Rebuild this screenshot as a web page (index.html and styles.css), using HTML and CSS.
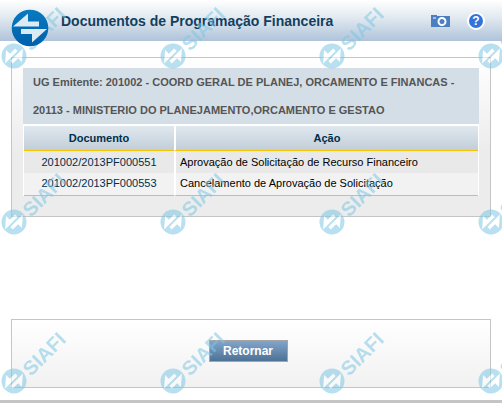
FILE: index.html
```html
<!DOCTYPE html>
<html lang="pt-BR">
<head>
  <meta charset="utf-8">
  <title>Documentos de Programação Financeira</title>
  <link rel="stylesheet" href="styles.css">
</head>
<body>
  <header class="topbar">
    <svg class="logo" viewBox="0 0 38 38" aria-hidden="true">
      <defs>
        <linearGradient id="logoBlue" x1="0" y1="0" x2="0" y2="1">
          <stop offset="0" stop-color="#087abf"/>
          <stop offset="1" stop-color="#0060ac"/>
        </linearGradient>
      </defs>
      <circle cx="19" cy="19" r="18.3" fill="url(#logoBlue)"/>
      <path d="M2 17.500L17 4.500V12.500H28V17.500Z" fill="#dceaf4"/>
      <path d="M36 20L21 33.500V25H10V20Z" fill="#dceaf4"/>
    </svg>
    <h1>Documentos de Programação Financeira</h1>
    <button type="button" class="icon" aria-label="Capturar tela">
      <svg width="19" height="12" viewBox="0 0 19 12">
        <path d="M0 0H6V1H19V12H0Z" fill="#4b7fc1"/>
        <path d="M2 3H5" stroke="#fff"/>
        <circle cx="11" cy="6.500" r="3.500" fill="none" stroke="#fff" stroke-width="2"/>
      </svg>
    </button>
    <button type="button" class="icon" aria-label="Ajuda"><span class="help">?</span></button>
  </header>

  <main>
    <section class="panel">
      <h2>UG Emitente: 201002 - COORD GERAL DE PLANEJ, ORCAMENTO E FINANCAS - 20113 - MINISTERIO DO PLANEJAMENTO,ORCAMENTO E GESTAO</h2>
      <table>
        <thead>
          <tr><th class="doc">Documento</th><th>Ação</th></tr>
        </thead>
        <tbody>
          <tr><td class="doc">201002/2013PF000551</td><td>Aprovação de Solicitação de Recurso Financeiro</td></tr>
          <tr><td class="doc">201002/2013PF000553</td><td>Cancelamento de Aprovação de Solicitação</td></tr>
        </tbody>
      </table>
    </section>

    <section class="panel actions">
      <button type="button" class="return">Retornar</button>
    </section>
  </main>
  <footer></footer>

  <!-- repeated SIAFI mark over the whole page -->
  <div class="watermark" aria-hidden="true">
    <svg>
      <defs>
        <pattern id="mark" width="159" height="68" patternUnits="userSpaceOnUse">
          <circle cx="14" cy="54" r="12.500" fill="#7fc8e4"/>
          <g transform="translate(14 54) rotate(-45) scale(0.680) translate(-19 -19)" fill="#fff">
            <path d="M2 17.500L17 4.500V12.500H28V17.500Z"/>
            <path d="M36 20.500L21 33.500V25.500H10V20.500Z"/>
          </g>
          <text class="mark-text" transform="translate(31 50) rotate(-45)">SIAFI</text>
        </pattern>
      </defs>
      <rect width="100%" height="68" fill="url(#mark)"/>
    </svg>
    <svg><rect width="100%" height="68" fill="url(#mark)"/></svg>
    <svg><rect width="100%" height="68" fill="url(#mark)"/></svg>
  </div>
</body>
</html>
```

FILE: styles.css
```css
body {
  position: relative;
  margin: 0;
  background: #fff;
  font-family: "Liberation Sans", Arial, sans-serif;
  font-size: 11px;
  color: #000;
}
.topbar {
  display: flex;
  align-items: center;
  height: 41px;
  padding: 0 17px 0 11px;
  background: linear-gradient(#fff, #e0e8ef 45%, #afc3da);
}
.logo {
  width: 38px;
  height: 38px;
  margin: 14px 12px 0 0;
  flex: none;
  position: relative;
  z-index: 2;
}
h1 {
  flex: 1;
  margin: 0;
  font-size: 14px;
  color: #123f60;
}
.icon {
  display: flex;
  margin: 0 0 0 17px;
  padding: 0;
  border: 0;
  background: none;
  cursor: pointer;
}
.help {
  width: 14px;
  height: 14px;
  border: 2px solid #fff;
  border-radius: 50%;
  background: #3274da;
  color: #fff;
  font: bold 12px/14px "Liberation Sans", Arial, sans-serif;
  text-align: center;
}
main {
  padding: 16px 11px 12px;
}
.panel {
  padding: 10px 11px 20px;
  border: 1px solid #c5c5c5;
  background: linear-gradient(#fff, #ececec 60%);
}
h2 {
  margin: 0;
  padding: 0 10px;
  background: #d4dee7;
  color: #555;
  font-size: 11px;
  line-height: 28px;
}
table {
  width: 100%;
  border-spacing: 0;
  background: #fff;
  padding: 2px 1px 0;
}
th {
  height: 24px;
  padding: 0;
  border-bottom: 1px solid #f5c400;
  background: linear-gradient(#e0e8ef, #c2ced8);
  color: #002e4d;
}
td {
  height: 22px;
  padding: 0 4px;
  background: #e9e9e9;
}
tbody tr:last-child td {
  height: 20px;
  padding-bottom: 2px;
  background: #f2f2f2;
  border-bottom: 1px solid #f5c400;
}
th + th,
td + td {
  border-left: 2px solid #fff;
}
.doc {
  width: 150px;
  box-sizing: border-box;
  text-align: center;
}
td.doc {
  color: #002e4d;
}
.actions {
  display: flex;
  justify-content: center;
  margin-top: 102px;
  padding: 20px 6px 25px 0;
  background: linear-gradient(#fff, #f1f1f1);
}
.return {
  width: 79px;
  height: 22px;
  padding: 0;
  border: 1px solid #a5a5a5;
  background: linear-gradient(#82a6cb, #4e7295);
  color: #fff;
  font: bold 12px "Liberation Sans", Arial, sans-serif;
}
footer {
  height: 3px;
  background: #c5c5c5;
}
.watermark {
  position: absolute;
  inset: 0;
  padding-top: 2px;
  overflow: hidden;
  opacity: 0.55;
  pointer-events: none;
}
.watermark svg {
  display: block;
  width: 100%;
  height: 68px;
  margin-bottom: 91px;
}
.watermark svg:first-child {
  margin-bottom: 98px;
}
.mark-text {
  fill: #7fc8e4;
  font: bold 20px "Liberation Sans", Arial, sans-serif;
}
```
